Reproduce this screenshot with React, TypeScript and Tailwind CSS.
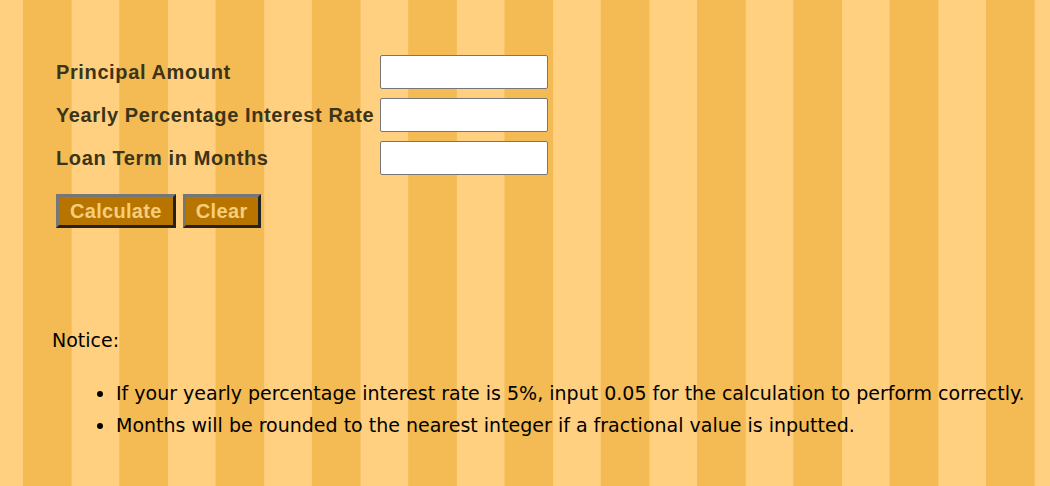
export default function App() {
  const rows = ["Principal Amount", "Yearly Percentage Interest Rate", "Loan Term in Months"];
  return (
    <div className="min-h-[486px] w-full bg-[linear-gradient(90deg,#f4ba53_50%,#ffd07f_50%)] bg-[length:96.3px_100%] bg-[position:23px_0] pl-[52px] pt-[55px] font-['DejaVu_Sans',Verdana,sans-serif]">
      <div className="pl-1 font-['Liberation_Sans',Arial,sans-serif]">
        <div className="flex flex-col gap-[9px]">
          {rows.map((r) => (
            <div key={r} className="flex h-[34px] items-center">
              <label className="w-[324px] whitespace-nowrap text-[20px] font-bold tracking-[0.62px] text-[#3b3418]">{r}</label>
              <input
                type="text"
                className="h-[34px] w-[168px] rounded-[2px] border border-[#767676] bg-white"
              />
            </div>
          ))}
        </div>
        <div className="mt-[19px] flex gap-[7px]">
          <button className="h-[34px] border-[3px] border-t-[#767676] border-l-[#767676] border-b-[#222] border-r-[#222] bg-[#b77500] px-[11px] text-[20px] font-bold leading-none tracking-[0.3px] text-[#f8cd78]">
            Calculate
          </button>
          <button className="h-[34px] border-[3px] border-t-[#767676] border-l-[#767676] border-b-[#222] border-r-[#222] bg-[#b77500] px-[10px] text-[20px] font-bold leading-none tracking-[0.4px] text-[#f8cd78]">
            Clear
          </button>
        </div>
      </div>
      <p className="mt-[98px] text-[19px] text-black">Notice:</p>
      <ul className="mt-[22px] list-disc pl-[64px] text-[19px] leading-[32px] text-black">
        <li>If your yearly percentage interest rate is 5%, input 0.05 for the calculation to perform correctly.</li>
        <li>Months will be rounded to the nearest integer if a fractional value is inputted.</li>
      </ul>
    </div>
  );
}
